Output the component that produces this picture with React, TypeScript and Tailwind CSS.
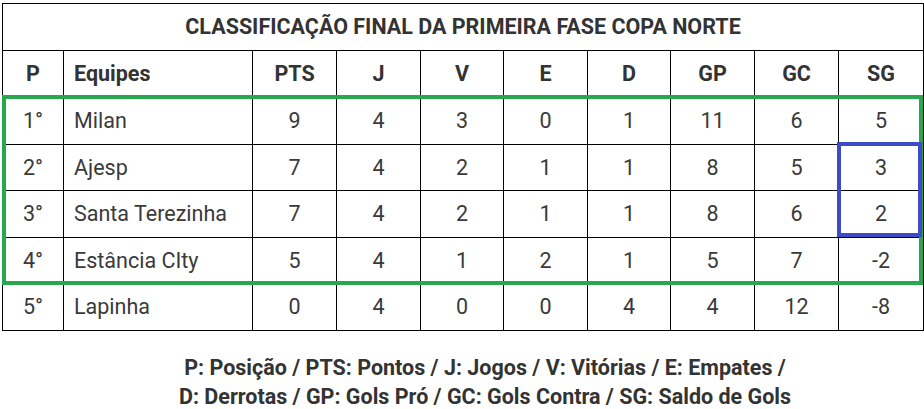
export default function App() {
  const cols = ["P", "Equipes", "PTS", "J", "V", "E", "D", "GP", "GC", "SG"]
  const rows = [
    ["1°", "Milan", "9", "4", "3", "0", "1", "11", "6", "5"],
    ["2°", "Ajesp", "7", "4", "2", "1", "1", "8", "5", "3"],
    ["3°", "Santa Terezinha", "7", "4", "2", "1", "1", "8", "6", "2"],
    ["4°", "Estância CIty", "5", "4", "1", "2", "1", "5", "7", "-2"],
    ["5°", "Lapinha", "0", "4", "0", "0", "4", "4", "12", "-8"],
  ]
  const rowH = ["h-[47px]", "h-[46px]", "h-[47px]", "h-[46px]", "h-[47px]"]

  return (
    <div className="w-[924px] h-[409px] bg-white text-[#3a3a3a] font-['Roboto',sans-serif] overflow-hidden">
      <div className="relative pt-[3px] pl-[2px]">
        <table className="table-fixed border-collapse w-[921px] text-[21.5px]">
          <colgroup>
            <col className="w-[61px]" />
            <col className="w-[189px]" />
            <col className="w-[84px]" />
            <col className="w-[84px]" />
            <col className="w-[83px]" />
            <col className="w-[84px]" />
            <col className="w-[83px]" />
            <col className="w-[84px]" />
            <col className="w-[84px]" />
            <col className="w-[85px]" />
          </colgroup>
          <thead>
            <tr className="h-[47px]">
              <th colSpan={10} className="border border-black font-bold text-center text-[#333] pt-[1px]">
                CLASSIFICAÇÃO FINAL DA PRIMEIRA FASE COPA NORTE
              </th>
            </tr>
            <tr className="h-[47px]">
              {cols.map((c, i) => (
                <th
                  key={c}
                  className={`border border-black font-bold text-[#333] pt-[1px] ${i === 1 ? "text-left pl-[10px]" : "text-center"}`}
                >
                  {c}
                </th>
              ))}
            </tr>
          </thead>
          <tbody>
            {rows.map((r, ri) => (
              <tr key={ri} className={rowH[ri]}>
                {r.map((v, i) => (
                  <td
                    key={i}
                    className={`border border-black p-0 pt-[1px] ${i === 1 ? "text-left pl-[10px]" : "text-center"}`}
                  >
                    {v}
                  </td>
                ))}
              </tr>
            ))}
          </tbody>
        </table>

        {/* highlight boxes */}
        <div className="absolute left-[2px] top-[95px] w-[921px] h-[190px] border-[4px] border-[#27a84e]" />
        <div className="absolute left-[837px] top-[142px] w-[85px] h-[95px] border-[4px] border-[#3c4bc6]" />
      </div>

      <div className="mt-[22px] pl-[46px] text-center font-bold text-[21.5px] leading-[29px] text-[#333]">
        <p>P: Posição / PTS: Pontos / J: Jogos / V: Vitórias / E: Empates /</p>
        <p>D: Derrotas / GP: Gols Pró / GC: Gols Contra / SG: Saldo de Gols</p>
      </div>
    </div>
  )
}
